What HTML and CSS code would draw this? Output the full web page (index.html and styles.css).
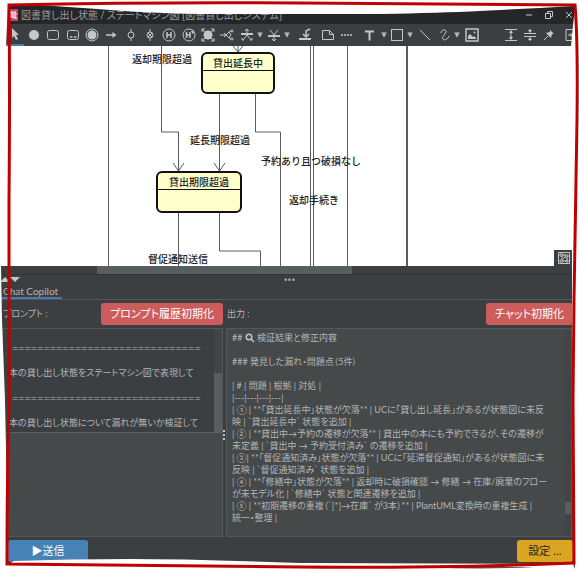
FILE: index.html
```html
<!DOCTYPE html>
<html lang="ja">
<head>
<meta charset="utf-8">
<title>図書貸し出し状態 / ステートマシン図</title>
<link rel="stylesheet" href="styles.css">
</head>
<body>
<div class="app">
  <header class="titlebar">
    <svg class="logo" viewBox="0 0 10 12" aria-hidden="true"><rect width="10" height="12" fill="#d93a66"/><path d="M1 3h4v5H1zM3 3v5M7 2v7M5 9h4M7 5h2" fill="none" stroke="#fff" stroke-width="1.2"/></svg>
    <h1>図書貸し出し状態 / ステートマシン図 [図書貸し出しシステム]</h1>
    <div class="window-buttons">
      <button aria-label="最小化"><svg viewBox="0 0 10 10"><path d="M2 5h6"/></svg></button>
      <button aria-label="元に戻す"><svg viewBox="0 0 10 10"><path d="M1.500 3.500h5v5h-5zM3.500 3V1.500h5v5H7"/></svg></button>
      <button aria-label="閉じる"><svg viewBox="0 0 10 10"><path d="M2 2l6 6M8 2l-6 6"/></svg></button>
    </div>
  </header>

  <nav class="toolbar" aria-label="図形ツール">
    <button class="active" aria-label="選択"><svg viewBox="0 0 16 16"><path class="fill" d="M5 2l7 7H9l2 4-2 1-2-4-2 2z"/></svg></button>
    <button aria-label="開始"><svg viewBox="0 0 16 16"><circle class="fill" cx="8" cy="8" r="5"/></svg></button>
    <button aria-label="状態"><svg viewBox="0 0 16 16"><rect x="2.500" y="3.500" width="11" height="9" rx="2"/></svg></button>
    <button aria-label="サブマシン"><svg viewBox="0 0 16 16"><rect x="2.500" y="3.500" width="11" height="9" rx="2"/><path class="bold" d="M5 10h2.500M9 10h2.500"/></svg></button>
    <button aria-label="終了"><svg viewBox="0 0 16 16"><circle cx="8" cy="8" r="6"/><circle class="fill" cx="8" cy="8" r="4.500"/></svg></button>
    <button aria-label="遷移"><svg viewBox="0 0 16 16"><path class="bold" d="M3 8h8"/><path class="fill" d="M9.500 5l4 3-4 3z"/></svg></button>
    <button aria-label="入場点"><svg viewBox="0 0 16 16"><circle cx="8" cy="8" r="3"/><path d="M8 2v3M8 11v3"/></svg></button>
    <button aria-label="退場点"><svg viewBox="0 0 16 16"><circle cx="8" cy="8" r="3"/><path d="M8 2v3M8 11v3M6 6l4 4M10 6l-4 4"/></svg></button>
    <button aria-label="浅い履歴"><svg viewBox="0 0 16 16"><circle cx="8" cy="8" r="6"/><path class="bold" d="M6 5v6M10 5v6M6 8h4"/></svg></button>
    <button aria-label="深い履歴"><svg viewBox="0 0 16 16"><circle cx="8" cy="8" r="6"/><path class="bold" d="M5.500 5v6M9 5v6M5.500 8H9"/><path d="M10 4l3 2M12.500 3L11 7"/></svg></button>
    <button aria-label="接続点"><svg viewBox="0 0 16 16"><circle class="fill" cx="8" cy="8" r="4.500"/><path d="M2 5V2h3M11 2h3v3M14 11v3h-3M5 14H2v-3M2 2l3 3M14 2l-3 3M2 14l3-3M14 14l-3-3"/></svg></button>
    <button aria-label="分岐"><svg viewBox="0 0 16 16"><path d="M1 8h6M5 6l2 2-2 2M7 8l3-3 2 3-2 3zM10 5l2-1M10 11l2 1"/><circle cx="13" cy="4" r="1"/><circle cx="13" cy="12" r="1"/></svg></button>
    <button aria-label="フォーク"><svg viewBox="0 0 16 16"><path class="thick" d="M2 7h12"/><path d="M8 2v6M8 8l-4 5M8 8l4 5M6 4l2-2 2 2M3 11v2h2M13 11v2h-2"/></svg></button>
    <button class="more" aria-label="フォークの種類">▼</button>
    <button aria-label="ジョイン"><svg viewBox="0 0 16 16"><path class="thick" d="M2 9h12"/><path d="M4 3l4 5 4-5M8 8v6M6 12l2 2 2-2"/></svg></button>
    <button class="more" aria-label="ジョインの種類">▼</button>
    <button aria-label="合流"><svg viewBox="0 0 16 16"><path class="thick" d="M2 12h12"/><path class="bold" d="M13 2L9 4v6M6 7l3 3 3-3"/></svg></button>
    <button aria-label="ノート"><svg viewBox="0 0 16 16"><path d="M2.500 3.500h7l4 4v5h-11zM9.500 3.500v4h4"/></svg></button>
    <button aria-label="アンカー"><svg viewBox="0 0 16 16"><path class="bold" d="M2 8h12" stroke-dasharray="2 1"/></svg></button>
    <button aria-label="テキスト"><svg viewBox="0 0 16 16"><path class="thick" d="M4 4.500h9M8.500 4.500v9"/></svg></button>
    <button class="more" aria-label="テキストの種類">▼</button>
    <button aria-label="四角形"><svg viewBox="0 0 16 16"><rect x="2.500" y="2.500" width="11" height="11"/></svg></button>
    <button class="more" aria-label="図形の種類">▼</button>
    <button aria-label="直線"><svg viewBox="0 0 16 16"><path d="M3 3l10 10"/></svg></button>
    <button aria-label="自由線"><svg viewBox="0 0 16 16"><path d="M4 6c0-4 6-4 5-1S4 10 6 12s5 0 6-3"/></svg></button>
    <button class="more" aria-label="線の種類">▼</button>
    <button aria-label="画像"><svg viewBox="0 0 16 16"><rect class="bold" x="2" y="2" width="12" height="12"/><path class="fill" d="M4 12V9l2-2 3 3 1-1 2 2v1z"/><circle class="fill" cx="10.500" cy="5.500" r="1"/></svg></button>
    <span></span>
    <button aria-label="上下に広げる"><svg viewBox="0 0 16 16"><path d="M2 2.500h12M2 13.500h12M8 4v8"/><path class="fill" d="M8 3l2 3H6zM8 13l2-3H6z"/></svg></button>
    <button aria-label="上下に縮める"><svg viewBox="0 0 16 16"><path d="M2 6.500h12M2 9.500h12M8 2v3M8 11v3"/><path class="fill" d="M8 6l2-3H6zM8 10l2 3H6z"/></svg></button>
    <button aria-label="固定"><svg viewBox="0 0 16 16"><path d="M7 9l-4 4"/><path class="fill" d="M9 3l4 4-2 0-1 4-5-5 4-1z"/></svg></button>
    <button aria-label="ペインを開く"><svg viewBox="0 0 16 16"><path d="M13 2.500H3v11h10M5 8h5M8 6v4"/></svg></button>
  </nav>

  <main class="canvas">
    <svg class="diagram" width="579" height="220" viewBox="0 46 579 220" role="img" aria-label="ステートマシン図">
      <g class="edges">
        <path d="M108.500 46v220M161.500 46v86h17v39M219.500 93v78M255.500 93v39h25v134M310.500 46v220M313.500 46v220M347.500 46v220M178.500 211v55M219.500 211v40h41v15"/>
        <path class="wide" d="M407 46v220"/>
        <path d="M173 163l5.500 8 5.500-8M214 163l5.500 8 5.500-8M233 46l5 6 5-6M238 46v6"/>
      </g>
      <g class="state"><rect x="202" y="53" width="72" height="40" rx="5"/><path d="M202 70.500h72"/></g>
      <g class="state"><rect x="157" y="172" width="84" height="40" rx="5"/><path d="M157 189.500h84"/></g>
      <g class="labels">
        <text x="238" y="67">貸出延長中</text>
        <text x="199" y="186">貸出期限超過</text>
        <text x="162" y="63">返却期限超過</text>
        <text x="220" y="144">延長期限超過</text>
        <text x="311" y="165">予約あり且つ破損なし</text>
        <text x="314" y="204">返却手続き</text>
        <text x="178" y="263">督促通知送信</text>
      </g>
    </svg>
    <button class="overview" aria-label="全体図"><svg viewBox="0 0 12 12"><path d="M.5.500h11v11H.500zM2 2h3v2H2zM7 3h3v2H7zM2 8h3v2H2zM8 8h2v2H8zM5 3h2M4 4v4M5 9h3M9 5v3M5 7l2-2"/></svg></button>
  </main>
  <div class="hscroll"><span></span></div>
  <div class="splitter"><span class="arrows"><i></i><i class="down"></i></span><span class="dots">•••</span></div>

  <div class="tabs"><button>Chat Copilot</button></div>

  <section class="chat">
    <div class="pane prompt">
      <div class="pane-head"><label for="message">プロンプト :</label><button class="danger">プロンプト履歴初期化</button></div>
      <div class="box split">
        <div class="history">
          <div class="log" role="log" aria-label="プロンプト履歴">
            <p class="rule">==============================</p>
            <p>本の貸し出し状態をステートマシン図で表現して</p>
            <p class="rule">==============================</p>
            <p>本の貸し出し状態について漏れが無いか検証して</p>
          </div>
          <div class="vscroll"><span></span></div>
        </div>
        <textarea id="message"></textarea>
      </div>
      <div class="pane-foot"><button class="send">▶送信</button></div>
    </div>
    <svg class="grip" viewBox="0 0 3 12" aria-hidden="true"><path d="M0 1h2v2H0zM0 5h2v2H0zM0 9h2v2H0z"/></svg>
    <div class="pane result">
      <div class="pane-head"><label for="output">出力 :</label><button class="danger">チャット初期化</button></div>
      <div class="box output">
        <output id="output">## <svg class="lens" viewBox="0 0 10 10" aria-hidden="true"><circle cx="4" cy="4" r="2.800"/><path d="M6 6l3 3"/></svg> 検証結果と修正内容

### 発見した漏れ・問題点（5件）

| # | 問題 | 根拠 | 対処 |
|---|---|---|---|
| ① | **「貸出延長中」状態が欠落** | UCに「貸し出し延長」があるが状態図に未反
映 | `貸出延長中` 状態を追加 |
| ② | **貸出中→予約の遷移が欠落** | 貸出中の本にも予約できるが、その遷移が
未定義 | `貸出中 → 予約受付済み` の遷移を追加 |
| ③| **「督促通知済み」状態が欠落** | UCに「延滞督促通知」があるが状態図に未
反映 | `督促通知済み` 状態を追加 |
| ④ | **「修繕中」状態が欠落** | 返却時に破損確認 → 修繕 → 在庫/廃棄のフロー
が未モデル化 | `修繕中` 状態と関連遷移を追加 |
| ⑤ | **初期遷移の重複（`[*]→在庫` が3本）** | PlantUML変換時の重複生成 |
統一・整理 |</output>
        <div class="vscroll"><span></span></div>
      </div>
      <div class="pane-foot"><button class="settings">設定 ...</button></div>
    </div>
  </section>

  <svg class="frame" viewBox="0 0 579 569" preserveAspectRatio="none" aria-hidden="true">
    <path class="paper" d="M0 0H579V569H575L572 330V270L571 46L575 6Q520 9 480 11T380 14H200Q150 13 110 10T37 5H8L6 46V266H1L2 320L5 400L6 450L8 562V569H0z"/>
    <path class="paper" d="M9 564L14 561Q70 559 130 559T300 563L573 564L575 569H0z"/>
    <path class="shadow" d="M425 567Q480 570 535 567z"/>
    <path class="line" d="M9 5Q150 2 300 3T575 5Q578 40 577 120T574 300L573 400L574 563Q450 568 300 567T7 564Q7 480 9 400V200Q10 90 9 5z"/>
  </svg>
</div>
</body>
</html>
```

FILE: styles.css
```css
* { box-sizing: border-box; }

body {
  margin: 0;
  background: #fff;
  color: #b4b6b7;
  font: 10px/12px "Open Sans", "Noto Sans CJK JP", sans-serif;
  font-feature-settings: "palt";
}

button, textarea { font: inherit; font-feature-settings: inherit; color: inherit; }
button { border: 0; padding: 0; background: none; }
svg { fill: none; stroke: #c4c6c7; }

.app {
  position: relative;
  display: grid;
  grid-template-rows: 24px 22px 220px 8px 10px 16px 1fr;
  grid-template-columns: minmax(0, 1fr);
  min-height: 100vh;
  overflow: hidden;
  background: #3c3f41;
}

.titlebar {
  display: flex;
  align-items: center;
  gap: 3px;
  padding: 6px 0 0 8px;
  background: #242628;
}
.titlebar h1 { flex: 1; margin: 0; font-size: 10px; font-weight: 400; color: #9c9e9f; white-space: nowrap; }
.logo { width: 10px; height: 12px; stroke: none; }
.window-buttons { display: flex; }
.window-buttons button { width: 20px; height: 12px; }
.window-buttons svg { display: block; width: 10px; height: 10px; margin: auto; }

.toolbar {
  display: grid;
  grid-template-columns: repeat(4, 19px 19px 20px) 19px 8px 19px 8px 28px 17px 22px 22px 8px 18px 8px 22px 17px 8px 21px minmax(19px, 1fr) 19px 19px 20px 24px;
  padding-left: 5px;
  overflow: hidden;
}
.toolbar button { display: grid; place-items: center; }
.toolbar .more { font: 7px/8px "DejaVu Sans", sans-serif; }
.toolbar svg { width: 16px; height: 16px; }
.toolbar .active { border-bottom: 2px solid #4a78b0; }
.fill { fill: #c4c6c7; stroke: none; }
.bold { stroke-width: 1.5; }
.thick { stroke-width: 2; }

.canvas { position: relative; overflow: hidden; background: #fff; }
.diagram { display: block; }
.edges { stroke: #5c5c5c; }
.edges .wide { stroke-width: 2; }
.state { fill: #ffffcc; stroke: #111; }
.state rect { stroke-width: 2; }
.labels { fill: #222; stroke: none; font: 500 10px "Noto Sans CJK JP", sans-serif; text-anchor: middle; font-feature-settings: normal; }
.overview { position: absolute; right: 0; bottom: 0; width: 25px; height: 16px; padding: 2px 4px; background: #3c3f41; }
.overview svg { display: block; width: 12px; height: 12px; }

.hscroll { display: flex; }
.hscroll span { width: 44%; margin-left: 97px; background: #585d5f; }

.splitter { display: grid; grid-template-columns: 1fr auto 1fr; align-items: center; border-top: 1px solid #303335; }
.arrows { display: flex; }
.arrows i { border: 5px solid transparent; border-top: 0; border-bottom: 5px solid #c4c6c7; }
.arrows .down { border-top: 5px solid #c4c6c7; border-bottom: 0; }
.dots { line-height: 8px; }

.tabs { display: flex; border-bottom: 1px solid #55585a; }
.tabs button { padding: 0 4px 0 3px; border-bottom: 2px solid #4a78b0; font-family: Lato, sans-serif; }

.chat { display: grid; grid-template-columns: 221px 3px minmax(0, 1fr); padding-left: 2px; }
.grip { align-self: center; width: 3px; height: 12px; fill: #c4c6c7; stroke: none; }
.pane { display: grid; grid-template-rows: 28px 1fr 32px; min-width: 0; }
.pane-head { display: flex; align-items: center; justify-content: space-between; }
.pane-head label { padding-left: 1px; font-size: 9px; }
.result .pane-head { padding-right: 6px; }
.danger { height: 22px; padding: 0 9px; border-radius: 3px; background: #cd5c5c; color: #fff; font-size: 11px; }
.box { border: 1px solid #55585a; background: #45494a; }
.split { display: grid; grid-template-rows: 104px 1fr; }
.history { display: grid; grid-template-columns: minmax(0, 1fr) 8px; overflow: hidden; border-bottom: 1px solid #5c5f61; background: #3c3f41; }
.log { padding: 6px 0 0 6px; font-size: 9px; line-height: 25px; white-space: nowrap; }
.log p { margin: 0; }
.log .rule { padding-left: 3px; font-size: 11px; }
textarea { display: block; width: 100%; height: 100%; border: 0; margin: 0; padding: 0; background: none; resize: none; outline: 0; }
.vscroll { display: flex; background: #414546; }
.vscroll span { width: 100%; background: #585d5f; }
.history .vscroll { align-items: flex-end; }
.history .vscroll span { height: 62px; }

.output { display: grid; grid-template-columns: minmax(0, 1fr) 6px; margin-right: 7px; }
.output output { padding: 3px 0 0 5px; white-space: pre; overflow: hidden; font-size: 9px; font-family: Lato, "Noto Sans CJK JP", sans-serif; }
.output .vscroll { align-items: flex-end; }
.output .vscroll span { height: 12px; margin-bottom: 22px; }
.lens { width: 10px; height: 10px; vertical-align: -2px; stroke-width: 1.5; }

.pane-foot { display: flex; align-items: flex-start; padding-top: 3px; }
.prompt .pane-foot { padding-left: 6px; }
.result .pane-foot { justify-content: flex-end; padding-right: 6px; }
.send, .settings { height: 22px; border-radius: 3px; font-size: 11px; }
.send { width: 80px; background: #4682b4; color: #fff; }
.settings { width: 56px; background: #daa520; color: #222; }

.frame { position: absolute; inset: 0; width: 100%; height: 100%; pointer-events: none; }
.frame path { stroke: none; }
.frame .paper { fill: #fff; }
.frame .shadow { fill: #55585a; }
.frame .line { fill: none; stroke: #c00000; stroke-width: 3; }
```
